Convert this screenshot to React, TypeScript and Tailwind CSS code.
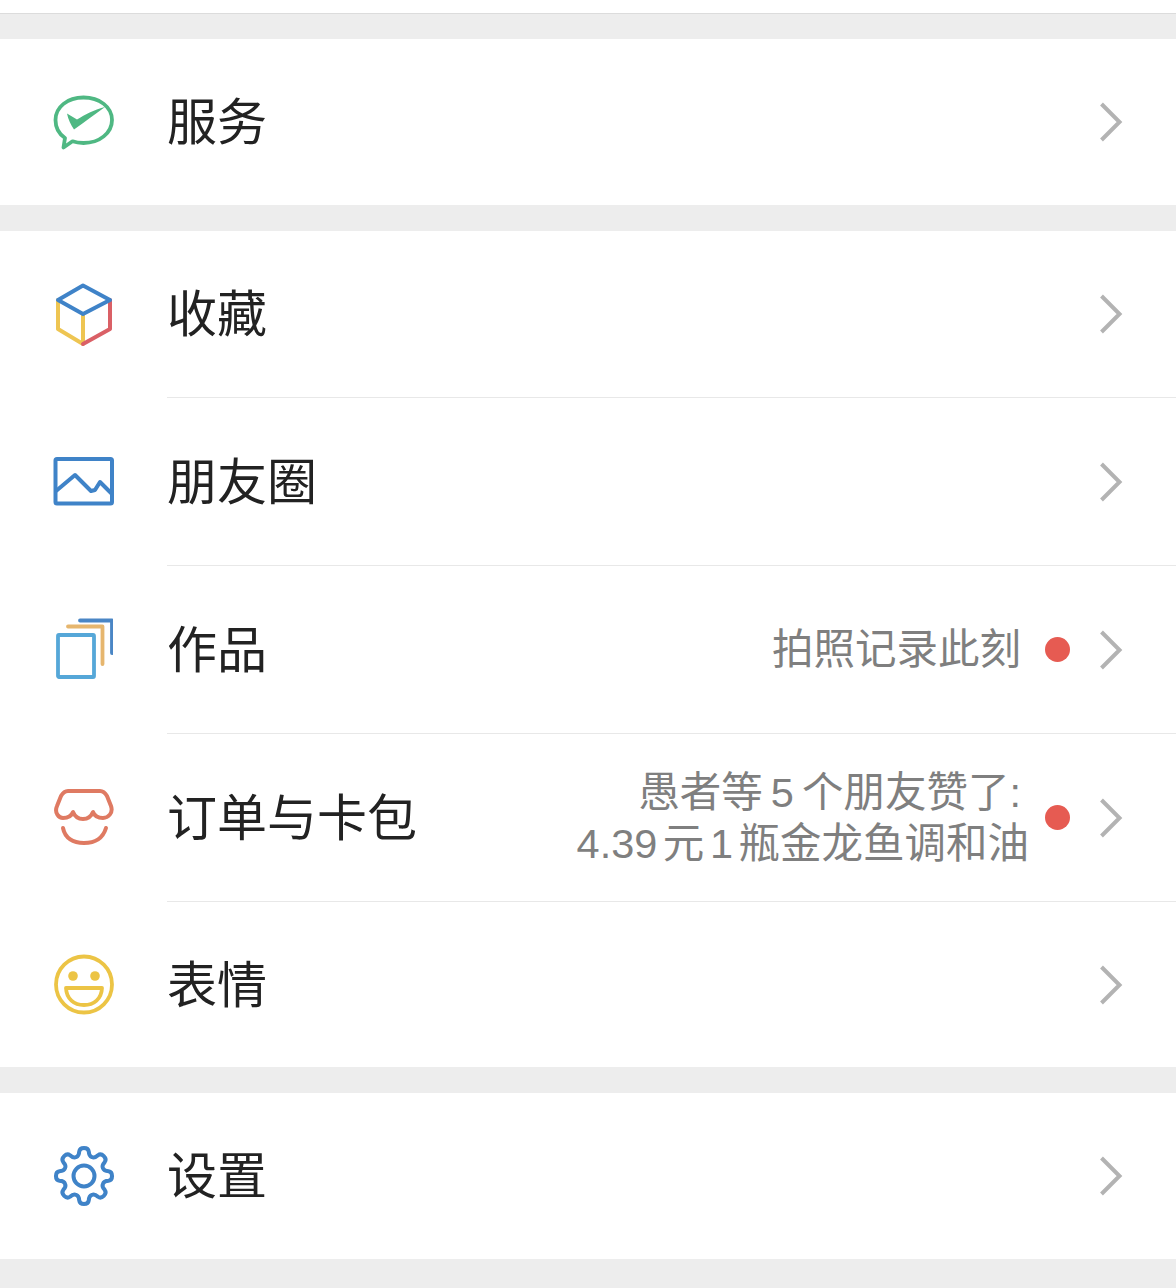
import React from 'react';

const font = "font-['Liberation_Sans','Noto_Sans_CJK_SC',sans-serif]";

const Chevron = () => (
    <svg width="26" height="42" viewBox="0 0 26 42" fill="none" className="shrink-0">
        <path d="M3.5 3 L21.5 21 L3.5 39" stroke="#b3b3b3" strokeWidth="4" />
    </svg>
);

const ServiceIcon = () => (
    <svg width="64" height="60" viewBox="0 0 64 60" fill="none">
        <path d="M30.5 5.5 C46.5 5.5 59 15 59 28 C59 41 46.5 51 30.5 51 C26.5 51 22.5 50.4 19.5 49.3 L10.5 55.5 L12 46 C6 42 2.5 35.5 2.5 28 C2.5 15 14.5 5.5 30.5 5.5 Z" stroke="#4fb883" strokeWidth="3.8" strokeLinejoin="round" />
        <path d="M14 21.5 L24 27.5 C32 22.5 42 17.5 52 15 C42 22 32 30 21 37.5 C18 33 15 27 14 21.5 Z" fill="#4fb883" />
    </svg>
);

const CubeIcon = () => (
    <svg width="60" height="64" viewBox="0 0 60 64" fill="none" strokeWidth="4" strokeLinejoin="round" strokeLinecap="round">
        <path d="M5 46 L30 61 L30 31 M5 46 L5 17" stroke="#eec552" />
        <path d="M57 17 L57 46 L30 61" stroke="#da6066" />
        <path d="M30 2.5 L57 17 L30 31 L5 17 Z" stroke="#3f83c8" />
    </svg>
);

const PhotoIcon = () => (
    <svg width="62" height="50" viewBox="0 0 62 50" fill="none" stroke="#3f83c8" strokeWidth="4" strokeLinejoin="round">
        <rect x="2.5" y="2" width="56.5" height="44.5" rx="1.5" />
        <path d="M3 34 L22 18 L38 34 L42 33 L47 25 L59 37" />
    </svg>
);

const WorksIcon = () => (
    <svg width="60" height="64" viewBox="0 0 60 64" fill="none" strokeWidth="3.8" strokeLinecap="round" strokeLinejoin="round">
        <rect x="5" y="17" width="36" height="42" rx="1" stroke="#55a7d8" />
        <path d="M15 8.5 L49.5 8.5 L49.5 46" stroke="#e6b66e" />
        <path d="M27 2.5 L59 2.5 L59 35" stroke="#4a86c5" />
    </svg>
);

const ShopIcon = () => (
    <svg width="62" height="58" viewBox="0 0 62 58" fill="none" stroke="#df7a62" strokeWidth="4" strokeLinecap="round" strokeLinejoin="round">
        <path d="M15 2 L47 2 C50 2 52 3.5 54 7 L58 17 C60.5 24 55 29 50 29 C45 29 41.5 27 40 23 C38 28 34 30 30 30 C26 30 22 28 20 23 C18.5 27 15 29 10 29 C6 29 1 24 4 17 L8 7 C10 3.5 12 2 15 2 Z" />
        <path d="M10 39 C12 49 20 54 31 54 C42 54 50 49 53 39" />
    </svg>
);

const SmileIcon = () => (
    <svg width="62" height="62" viewBox="0 0 62 62" fill="none">
        <circle cx="31" cy="30.5" r="28" stroke="#ecc445" strokeWidth="3.8" />
        <circle cx="20" cy="22" r="4.8" fill="#ecc445" />
        <circle cx="42" cy="22" r="4.8" fill="#ecc445" />
        <path d="M13 34 L49 34 C48.5 45 41 51 31 51 C21 51 13.5 45 13 34 Z" stroke="#ecc445" strokeWidth="3.8" strokeLinejoin="round" />
    </svg>
);

// 8 teeth around the centre of a 62 box
const polar = (deg: number, r: number) => {
    const a = (deg * Math.PI) / 180;
    return `${(31 + r * Math.sin(a)).toFixed(2)} ${(31 - r * Math.cos(a)).toFixed(2)}`;
};

const gearPath = () => {
    let d = `M${polar(-22.5, 20.5)}`;
    for (let i = 0; i < 8; i++) {
        const t = i * 45;
        d += ` Q${polar(t - 14, 20.5)} ${polar(t - 11, 25)}`;
        d += ` C${polar(t - 8, 29.5)} ${polar(t + 8, 29.5)} ${polar(t + 11, 25)}`;
        d += ` Q${polar(t + 14, 20.5)} ${polar(t + 22.5, 20.5)}`;
    }
    return d + ' Z';
};

const GearIcon = () => (
    <svg width="62" height="62" viewBox="0 0 62 62" fill="none" stroke="#3f83c8" strokeWidth="4" strokeLinejoin="round">
        <path d={gearPath()} />
        <circle cx="31" cy="31" r="10.5" />
    </svg>
);

const Dot = () => <span className="w-[25px] h-[25px] rounded-full bg-[#e65b52] shrink-0 mr-[28px]" />;

interface RowProps {
    icon: React.ReactNode;
    title: string;
    height: string;
    children?: React.ReactNode;
    divider?: boolean;
}

const Row: React.FC<RowProps> = ({ icon, title, height, children, divider }) => {
    return (
        <div className={`flex items-stretch ${height}`}>
            <div className="w-[167px] shrink-0 flex items-center pl-[53px]">
                {icon}
            </div>
            <div className={`flex-1 flex items-center pr-[52px] ${divider ? 'border-b border-[#e8e8e8]' : ''}`}>
                <span className="pt-[2px] text-[50px] leading-none text-[#222222]">{title}</span>
                <div className="ml-auto flex items-center">
                    {children}
                    <Chevron />
                </div>
            </div>
        </div>
    );
};

const App: React.FC = () => {
    return (
        <div className={`w-[1176px] h-[1288px] overflow-hidden bg-[#ededed] ${font}`}>
            <div className="h-[14px] bg-white border-b border-[#dcdcdc]" />
            <div className="mt-[25px] bg-white">
                <Row height="h-[166px]" icon={<ServiceIcon />} title="服务" />
            </div>
            <div className="mt-[26px] bg-white">
                <Row height="h-[167px]" icon={<CubeIcon />} title="收藏" divider />
                <Row height="h-[168px]" icon={<PhotoIcon />} title="朋友圈" divider />
                <Row height="h-[168px]" icon={<WorksIcon />} title="作品" divider>
                    <span className="text-[41.5px] leading-none text-[#7f7f7f] mr-[24px]">拍照记录此刻</span>
                    <Dot />
                </Row>
                <Row height="h-[168px]" icon={<ShopIcon />} title="订单与卡包" divider>
                    <div className="pt-[1px] text-[41.5px] leading-[51px] text-[#7f7f7f] text-right mr-[16px]">
                        <div className="pr-[8px] [word-spacing:-3.5px]">愚者等 5 个朋友赞了:</div>
                        <div className="[word-spacing:-6px]">4.39 元 1 瓶金龙鱼调和油</div>
                    </div>
                    <Dot />
                </Row>
                <Row height="h-[165px]" icon={<SmileIcon />} title="表情" />
            </div>
            <div className="mt-[26px] bg-white">
                <Row height="h-[166px]" icon={<GearIcon />} title="设置" />
            </div>
        </div>
    );
};

export default App;
